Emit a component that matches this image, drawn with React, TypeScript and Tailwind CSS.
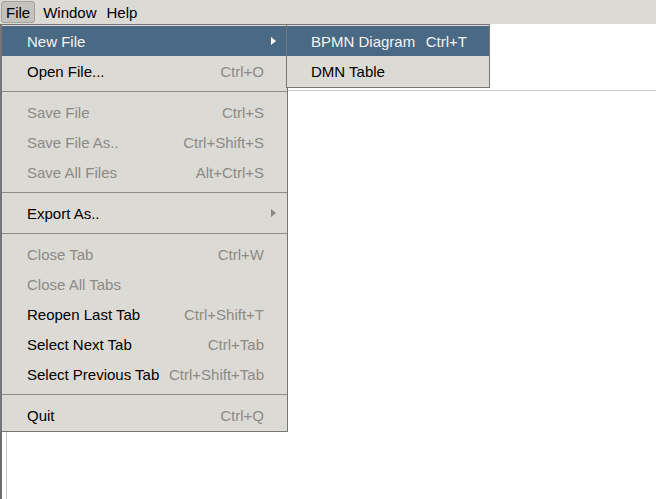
type Item = {
  label?: string;
  shortcut?: string;
  disabled?: boolean;
  active?: boolean;
  submenu?: boolean;
  separator?: boolean;
};

const fileMenu: Item[] = [
  { label: "New File", submenu: true, active: true },
  { label: "Open File...", shortcut: "Ctrl+O" },
  { separator: true },
  { label: "Save File", shortcut: "Ctrl+S", disabled: true },
  { label: "Save File As..", shortcut: "Ctrl+Shift+S", disabled: true },
  { label: "Save All Files", shortcut: "Alt+Ctrl+S", disabled: true },
  { separator: true },
  { label: "Export As..", submenu: true },
  { separator: true },
  { label: "Close Tab", shortcut: "Ctrl+W", disabled: true },
  { label: "Close All Tabs", disabled: true },
  { label: "Reopen Last Tab", shortcut: "Ctrl+Shift+T" },
  { label: "Select Next Tab", shortcut: "Ctrl+Tab" },
  { label: "Select Previous Tab", shortcut: "Ctrl+Shift+Tab" },
  { separator: true },
  { label: "Quit", shortcut: "Ctrl+Q" },
];

const newMenu: Item[] = [
  { label: "BPMN Diagram", shortcut: "Ctrl+T", active: true },
  { label: "DMN Table" },
];

function Arrow({ active }: { active?: boolean }) {
  return (
    <svg width="5" height="8" viewBox="0 0 5 8" className="shrink-0">
      <path d="M0 0 L5 4 L0 8 Z" fill={active ? "#ffffff" : "#8a8884"} />
    </svg>
  );
}

function MenuRow({ item, compact }: { item: Item; compact?: boolean }) {
  if (item.separator) {
    return (
      <div className="h-[11px] flex items-center">
        <div className="h-px w-full bg-[#8e8c88]" />
      </div>
    );
  }
  const labelColor = item.active
    ? "text-[#f2f4f6]"
    : item.disabled
    ? "text-[#8c8a86]"
    : "text-black";
  const shortcutColor = item.active ? "text-[#f2f4f6]" : "text-[#8c8a86]";
  return (
    <div
      className={`h-[30px] flex items-center justify-between ${
        compact ? "pl-[24px] pr-[22px]" : "pl-[25px] pr-[23px]"
      } ${item.active ? "bg-[#4a6984]" : ""}`}
    >
      <span className={labelColor}>{item.label}</span>
      {item.shortcut && <span className={shortcutColor}>{item.shortcut}</span>}
      {item.submenu && (
        <span className="-mr-[12px]">
          <Arrow active={item.active} />
        </span>
      )}
    </div>
  );
}

export default function App() {
  return (
    <div className="w-[656px] h-[499px] bg-white relative overflow-hidden flex flex-col font-['Liberation_Sans',Arial,sans-serif] text-[15px] leading-none">
      <div className="h-[24px] bg-[#dcdad5] flex items-center pl-[1px] text-black">
        <div className="h-[22px] px-[4px] flex items-center rounded-[3px] bg-[#c4c2bd] border border-[#a3a19c]">
          File
        </div>
        <div className="pl-[8px] pr-[6px]">Window</div>
        <div className="px-[4px]">Help</div>
      </div>

      <div className="flex-1 flex border-l-2 border-[#6c6c6c]">
        <div className="flex-1 ml-[4px] mt-[66px] border-l border-t border-[#c9c9c9]" />
      </div>

      {/* File menu */}
      <div className="absolute left-0 top-[24px] w-[288px] bg-[#dcdad5] border border-l-2 border-[#767676] py-[1px]">
        {fileMenu.map((item, i) => (
          <MenuRow key={i} item={item} />
        ))}
      </div>

      {/* New File submenu */}
      <div className="absolute left-[286px] top-[24px] w-[204px] bg-[#dcdad5] border border-[#767676] py-[1px]">
        {newMenu.map((item, i) => (
          <MenuRow key={i} item={item} compact />
        ))}
      </div>
    </div>
  );
}
